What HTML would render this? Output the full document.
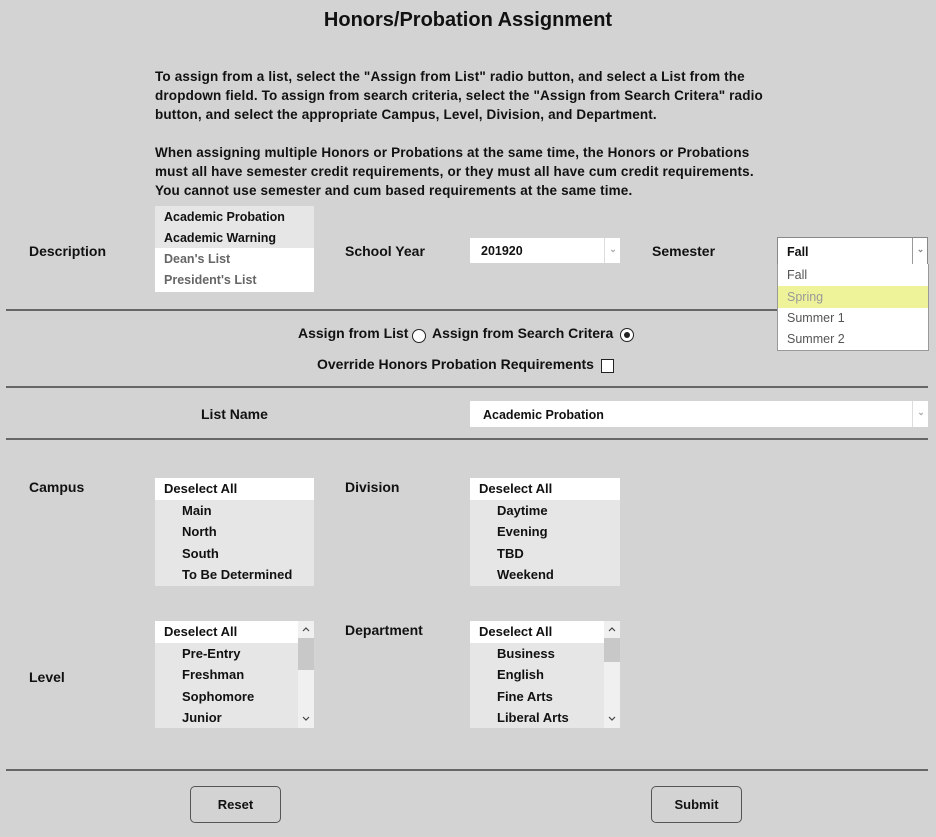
<!DOCTYPE html>
<html><head><meta charset="utf-8"><style>
body{margin:0;width:936px;height:837px;background:#d3d3d3;font-family:"Liberation Sans",sans-serif;font-weight:bold;color:#111;position:relative;overflow:hidden;font-size:13px}
.a{position:absolute;white-space:nowrap}
.hr{position:absolute;left:6px;width:922px;height:2px;background:#666}
.lbl{position:absolute;font-size:14px;white-space:nowrap}
.box{position:absolute;background:#e6e6e6;overflow:hidden}
.row{height:21.5px;line-height:21.5px;padding-left:27px;font-size:13px;white-space:nowrap}
.hd{background:#fff;padding-left:9px}
.sel{position:absolute;background:#fff}
.sb{position:absolute;right:0;top:0;width:16px;height:100%;background:#f0f0f0}
.btn{position:absolute;width:89px;height:35px;border:1px solid #555;border-radius:5px;text-align:center;line-height:35px;font-size:13px}
.ar{position:absolute;left:4px;width:8px;height:8px}
</style></head><body>
<div class="a" style="left:0;width:936px;text-align:center;top:9px;font-size:20px">Honors/Probation Assignment</div>
<div class="a" style="left:155px;top:67px;line-height:19px;font-size:13.5px;letter-spacing:0.15px">To assign from a list, select the "Assign from List" radio button, and select a List from the<br>dropdown field. To assign from search criteria, select the "Assign from Search Critera" radio<br>button, and select the appropriate Campus, Level, Division, and Department.<br><br>When assigning multiple Honors or Probations at the same time, the Honors or Probations<br>must all have semester credit requirements, or they must all have cum credit requirements.<br>You cannot use semester and cum based requirements at the same time.</div>

<div class="lbl" style="left:29px;top:243px">Description</div>
<div class="box" style="left:155px;top:206px;width:159px;height:86px;background:#fff">
<div style="background:#e6e6e6;padding-left:9px;height:21px;line-height:22px;font-size:12.5px">Academic Probation</div>
<div style="background:#e6e6e6;padding-left:9px;height:21px;line-height:22px;font-size:12.5px">Academic Warning</div>
<div style="color:#666;padding-left:9px;height:22px;line-height:22px;font-size:12.5px">Dean's List</div>
<div style="color:#666;padding-left:9px;height:22px;line-height:20px;font-size:12.5px">President's List</div>
</div>
<div class="lbl" style="left:345px;top:243px">School Year</div>
<div class="sel" style="left:470px;top:238px;width:150px;height:25px"><span class="a" style="left:11px;top:6px;font-size:12.5px">201920</span><span class="a" style="left:134px;top:0;height:25px;border-left:1px solid #ddd;width:16px;color:#aaa;font-size:9px;text-align:center;line-height:22px">&#8964;</span></div>
<div class="lbl" style="left:652px;top:243px">Semester</div>
<div class="sel" style="left:777px;top:237px;width:149px;height:26px;border:1px solid #888;z-index:2"><span class="a" style="left:9px;top:7px;font-size:12.5px">Fall</span><span class="a" style="left:134px;top:0;height:26px;border-left:1px solid #999;width:15px;color:#888;font-size:9px;text-align:center;line-height:22px">&#8964;</span></div>
<div class="sel" style="left:777px;top:264px;width:150px;height:86px;border:1px solid #999;border-top:none;font-weight:normal;font-size:12.5px;color:#555;z-index:2">
<div style="height:22px;line-height:22px;padding-left:9px">Fall</div>
<div style="height:22px;line-height:22px;padding-left:9px;background:#eef39a;color:#999">Spring</div>
<div style="height:21px;line-height:21px;padding-left:9px">Summer 1</div>
<div style="height:21px;line-height:21px;padding-left:9px">Summer 2</div>
</div>

<div class="hr" style="top:309px"></div>
<div class="lbl" style="left:298px;top:325px">Assign from List</div>
<div class="a" style="left:412px;top:329px;width:12px;height:12px;border:1px solid #222;border-radius:50%;background:#fff"></div>
<div class="lbl" style="left:432px;top:325px">Assign from Search Critera</div>
<div class="a" style="left:620px;top:328px;width:12px;height:12px;border:1px solid #222;border-radius:50%;background:#fff"></div>
<div class="a" style="left:624px;top:332px;width:6px;height:6px;border-radius:50%;background:#222"></div>
<div class="lbl" style="left:317px;top:356px">Override Honors Probation Requirements</div>
<div class="a" style="left:601px;top:359px;width:11px;height:12px;border:1px solid #222;background:#fff"></div>

<div class="hr" style="top:386px"></div>
<div class="lbl" style="left:201px;top:406px">List Name</div>
<div class="sel" style="left:470px;top:401px;width:458px;height:26px"><span class="a" style="left:13px;top:7px;font-size:12.5px">Academic Probation</span><span class="a" style="left:442px;top:0;width:16px;height:26px;border-left:1px solid #ddd;color:#aaa;font-size:9px;text-align:center;line-height:22px">&#8964;</span></div>
<div class="hr" style="top:438px"></div>

<div class="lbl" style="left:29px;top:479px">Campus</div>
<div class="box" style="left:155px;top:478px;width:159px;height:108px">
<div class="row hd">Deselect All</div><div class="row">Main</div><div class="row">North</div><div class="row">South</div><div class="row">To Be Determined</div></div>
<div class="lbl" style="left:345px;top:479px">Division</div>
<div class="box" style="left:470px;top:478px;width:150px;height:108px">
<div class="row hd">Deselect All</div><div class="row">Daytime</div><div class="row">Evening</div><div class="row">TBD</div><div class="row">Weekend</div></div>

<div class="lbl" style="left:29px;top:669px">Level</div>
<div class="box" style="left:155px;top:621px;width:159px;height:107px">
<div class="sb"><div style="position:absolute;top:17px;width:16px;height:32px;background:#c8c8c8"></div><svg class="ar" style="top:4px" viewBox="0 0 8 8"><path d="M1 6L4 3L7 6" stroke="#444" fill="none" stroke-width="1.2"/></svg><svg class="ar" style="top:94px" viewBox="0 0 8 8"><path d="M1 2L4 5L7 2" stroke="#444" fill="none" stroke-width="1.2"/></svg></div>
<div class="row hd" style="margin-right:16px">Deselect All</div><div class="row">Pre-Entry</div><div class="row">Freshman</div><div class="row">Sophomore</div><div class="row">Junior</div></div>
<div class="lbl" style="left:345px;top:622px">Department</div>
<div class="box" style="left:470px;top:621px;width:150px;height:107px">
<div class="sb"><div style="position:absolute;top:17px;width:16px;height:24px;background:#c8c8c8"></div><svg class="ar" style="top:4px" viewBox="0 0 8 8"><path d="M1 6L4 3L7 6" stroke="#444" fill="none" stroke-width="1.2"/></svg><svg class="ar" style="top:94px" viewBox="0 0 8 8"><path d="M1 2L4 5L7 2" stroke="#444" fill="none" stroke-width="1.2"/></svg></div>
<div class="row hd" style="margin-right:16px">Deselect All</div><div class="row">Business</div><div class="row">English</div><div class="row">Fine Arts</div><div class="row">Liberal Arts</div></div>

<div class="hr" style="top:769px"></div>
<div class="btn" style="left:190px;top:786px">Reset</div>
<div class="btn" style="left:651px;top:786px">Submit</div>
</body></html>
